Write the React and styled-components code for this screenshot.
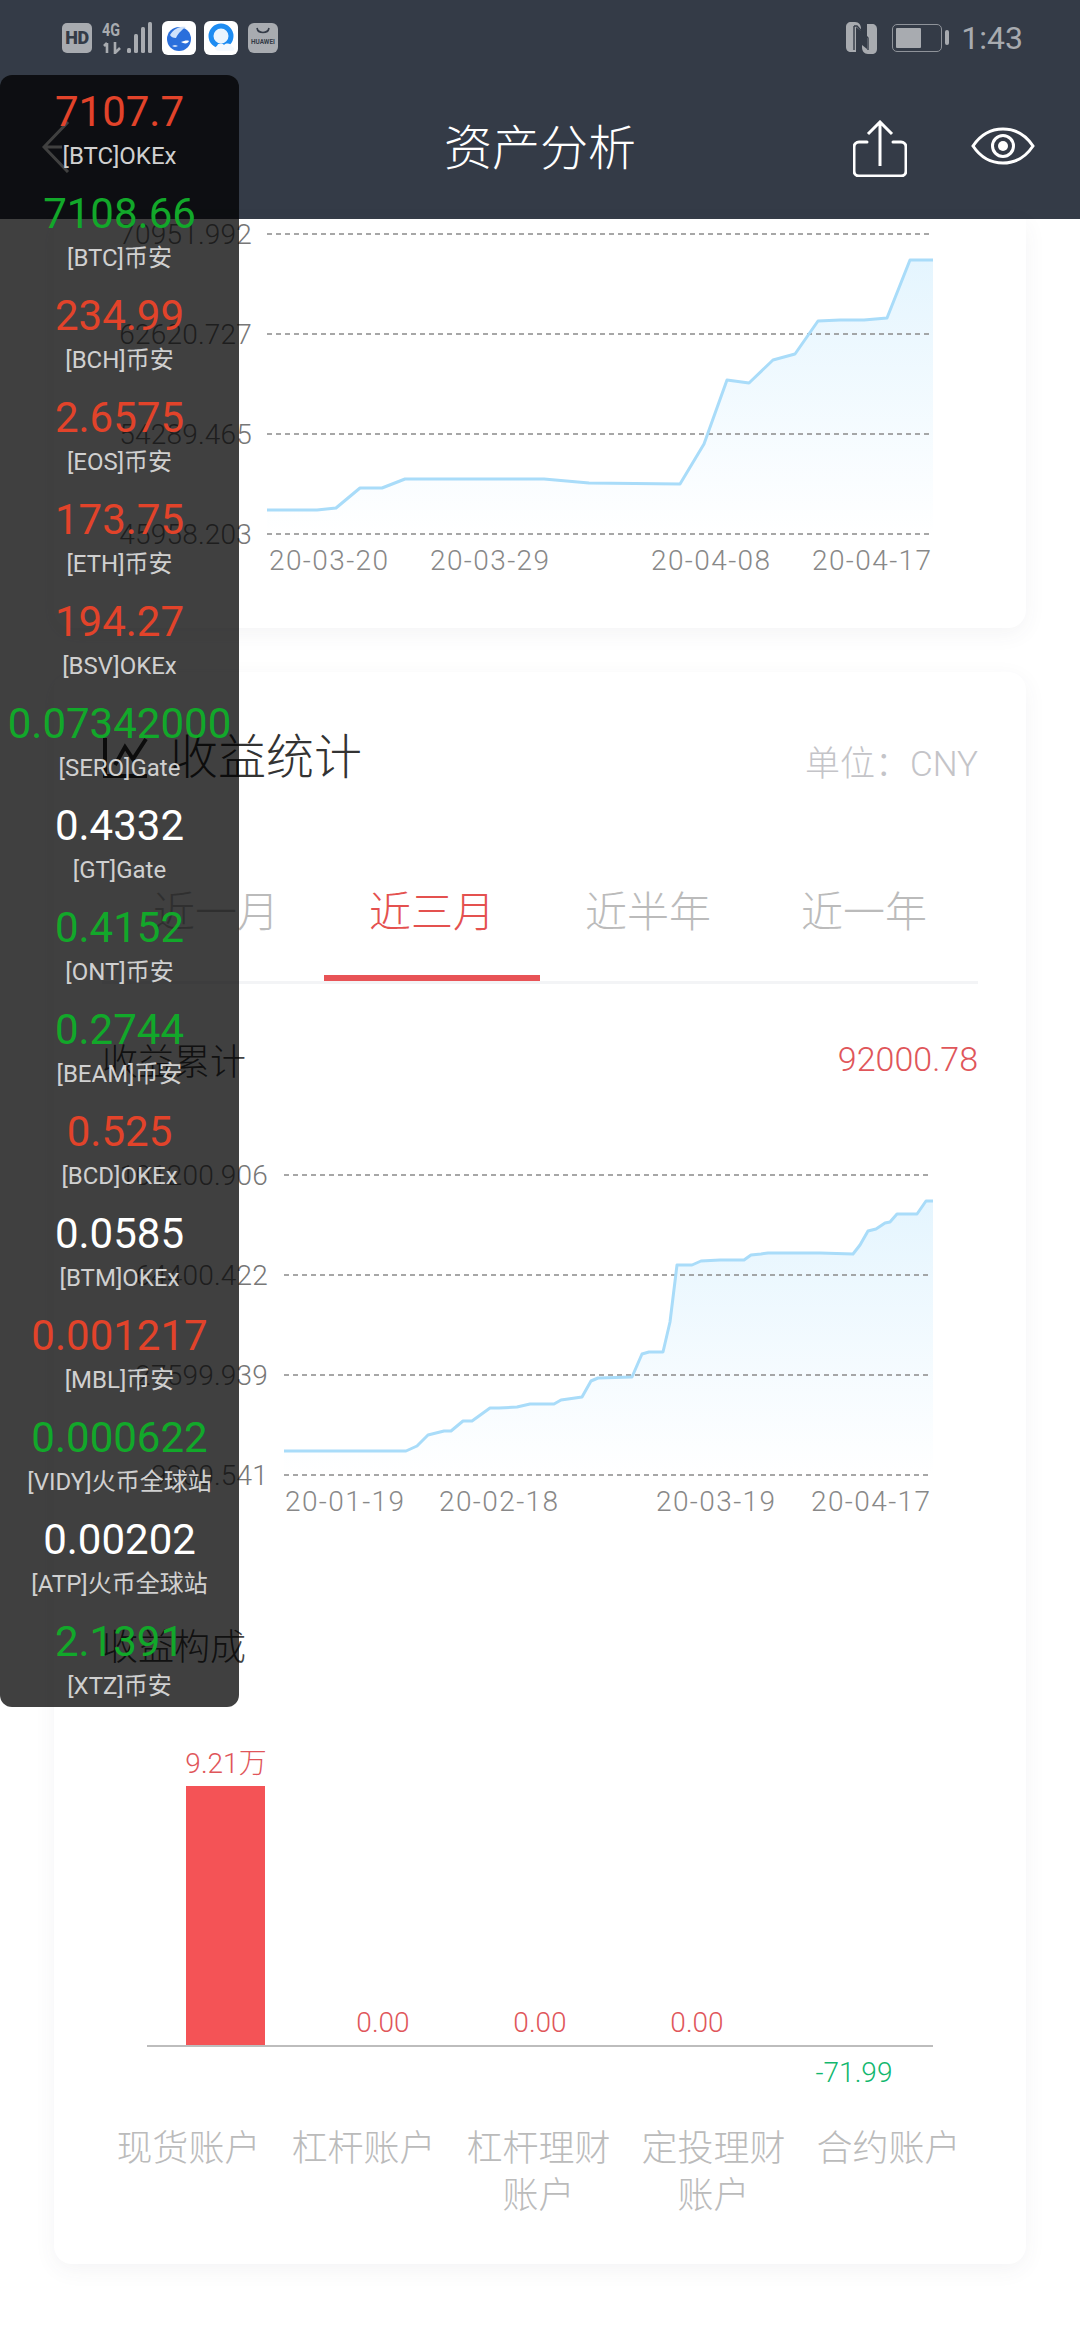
import React from "react";
import styled, { createGlobalStyle } from "styled-components";

const GlobalStyle = createGlobalStyle`
  html, body { margin: 0; padding: 0; background: #fff; }
  body { font-family: Roboto, "Noto Sans CJK SC", sans-serif; }
`;

const Screen = styled.div`
  position: relative;
  width: 1080px;
  height: 2340px;
  overflow: hidden;
  background: #fff;
`;

const Header = styled.header`
  height: 219px;
  background: #343b47;
`;

const StatusBar = styled.div`
  display: flex;
  align-items: center;
  height: 75px;
  padding: 0 57px 0 62px;
  color: #a8abb0;
`;

const HdBadge = styled.span`
  width: 30px;
  height: 30px;
  border-radius: 5px;
  background: #a8abb0;
  color: #343b47;
  font-size: 18px;
  font-weight: 900;
  line-height: 30px;
  text-align: center;
  letter-spacing: -0.5px;
`;

const StatusIcon = styled.svg`
  display: block;
  margin-left: ${(p) => p.$gap || 0}px;
`;

const Spacer = styled.div`
  flex: 1;
`;

const Battery = styled.span`
  position: relative;
  box-sizing: border-box;
  width: 50px;
  height: 28px;
  margin-left: 15px;
  padding: 3px;
  border: 1.5px solid #8f939a;
  border-radius: 5px;
  &::after {
    content: "";
    position: absolute;
    top: 5px;
    right: -8px;
    width: 4px;
    height: 15px;
    border-radius: 2px;
    background: #a8abb0;
  }
`;

const BatteryFill = styled.span`
  display: block;
  height: 100%;
  background: #a8abb0;
  border-radius: 1px;
`;

const Clock = styled.span`
  margin-left: 19px;
  font-size: 32px;
  line-height: 40px;
`;

const NavBar = styled.div`
  display: grid;
  grid-template-columns: 1fr auto 1fr;
  align-items: center;
  height: 144px;
  color: #fff;
`;

const BackIcon = styled.svg`
  display: block;
  margin: 0 0 0 42px;
`;

const Title = styled.h1`
  margin: 0;
  font-size: 48px;
  font-weight: 300;
  line-height: 60px;
  padding-top: 4px;
`;

const NavActions = styled.div`
  display: flex;
  align-items: flex-start;
  justify-content: flex-end;
  gap: 64px;
  padding: 3px 45px 0 0;
`;

const EyeSlot = styled.span`
  display: block;
  padding-top: 7px;
`;

const Main = styled.main`
  padding: 0 54px;
`;

const Card = styled.section`
  box-sizing: border-box;
  height: ${(p) => p.$height}px;
  margin-bottom: 44px;
  border-radius: ${(p) => (p.$cut ? "0 0 18px 18px" : "18px")};
  background: #fff;
  box-shadow: 0 6px 22px rgba(60, 70, 90, 0.06);
  font-weight: 300;
`;

const CardHead = styled.div`
  display: flex;
  align-items: center;
  justify-content: space-between;
  height: 172px;
  padding: 0 48px;
`;

const HeadTitle = styled.div`
  display: flex;
  align-items: center;
  gap: 22px;
  color: #333;
  font-size: 48px;
  line-height: 60px;
`;

const Unit = styled.span`
  padding-top: 4px;
  color: #c4c4c8;
  font-size: 35px;
`;

const Tabs = styled.div`
  display: flex;
  margin: 0 48px;
  padding-left: 6px;
  border-bottom: 3px solid #f3f4f6;
`;

const Tab = styled.div`
  box-sizing: border-box;
  width: 216px;
  height: 137px;
  padding-top: 45px;
  border-bottom: 6px solid ${(p) => (p.$active ? "#e85356" : "transparent")};
  color: ${(p) => (p.$active ? "#e4514f" : "#bbb")};
  font-size: 42px;
  line-height: 48px;
  text-align: center;
`;

const SumRow = styled.div`
  display: flex;
  align-items: center;
  justify-content: space-between;
  height: 152px;
  padding: 0 48px 3px;
  box-sizing: border-box;
  color: #444;
  font-size: 36px;
`;

const SumValue = styled.span`
  color: #e0565a;
  font-size: 34px;
`;

const ChartSvg = styled.svg`
  display: block;
  width: 972px;
  overflow: visible;
  text {
    font-family: Roboto, "Noto Sans CJK SC", sans-serif;
    font-weight: 300;
  }
`;

const SectionTitle = styled.div`
  margin-top: 93px;
  padding: 0 48px;
  color: #444;
  font-size: 36px;
  line-height: 50px;
`;

const Categories = styled.div`
  display: flex;
  margin-top: 13px;
  padding: 0 47px;
`;

const Category = styled.div`
  box-sizing: border-box;
  width: 175px;
  padding: 0 15px;
  color: #bbb;
  font-size: 36px;
  line-height: 47px;
  text-align: center;
`;

const TickerPanel = styled.aside`
  position: absolute;
  top: 75px;
  left: 0;
  width: 239px;
  height: 1632px;
  border-radius: 12px;
  background: rgba(0, 0, 0, 0.75);
`;

const Ticker = styled.div`
  box-sizing: border-box;
  height: 102px;
  padding-top: 8px;
  text-align: center;
  white-space: nowrap;
`;

const tickerColors = { up: "#e2432a", down: "#12a82a", flat: "#fff" };

const Price = styled.div`
  color: ${(p) => tickerColors[p.$tone]};
  font-size: 42px;
  line-height: 58px;
`;

const Pair = styled.div`
  color: #d0d0d0;
  font-size: 24px;
  line-height: 30px;
`;

const tickers = [
  ["7107.7", "[BTC]OKEx", "up"],
  ["7108.66", "[BTC]币安", "down"],
  ["234.99", "[BCH]币安", "up"],
  ["2.6575", "[EOS]币安", "up"],
  ["173.75", "[ETH]币安", "up"],
  ["194.27", "[BSV]OKEx", "up"],
  ["0.07342000", "[SERO]Gate", "down"],
  ["0.4332", "[GT]Gate", "flat"],
  ["0.4152", "[ONT]币安", "down"],
  ["0.2744", "[BEAM]币安", "down"],
  ["0.525", "[BCD]OKEx", "up"],
  ["0.0585", "[BTM]OKEx", "flat"],
  ["0.001217", "[MBL]币安", "up"],
  ["0.000622", "[VIDY]火币全球站", "down"],
  ["0.00202", "[ATP]火币全球站", "flat"],
  ["2.1391", "[XTZ]币安", "down"],
];

// points read off the screenshot, in page pixels
const lineA = [
  [267, 510], [317, 510], [336, 508], [360, 488], [382, 488], [405, 479], [544, 479],
  [589, 483], [680, 484], [704, 444], [727, 380], [749, 383], [773, 360], [795, 354],
  [818, 321], [840, 320], [864, 320], [887, 318], [910, 260], [933, 260],
];

const lineB = [
  [284, 1451], [406, 1451], [417, 1446], [428, 1435], [444, 1431], [451, 1431], [463, 1421],
  [472, 1421], [490, 1408], [499, 1408], [517, 1407], [530, 1404], [554, 1404], [561, 1400],
  [582, 1397], [591, 1381], [598, 1378], [632, 1377], [642, 1354], [649, 1352], [663, 1352],
  [670, 1322], [677, 1265], [692, 1265], [701, 1261], [720, 1260], [744, 1260], [751, 1255],
  [761, 1254], [768, 1253], [820, 1253], [853, 1254], [860, 1245], [868, 1231], [876, 1229],
  [885, 1223], [890, 1222], [897, 1214], [917, 1214], [926, 1201], [933, 1201],
];

const toPoints = (pts) => pts.map((p) => p.join(",")).join(" ");

const LineChart = ({ id, top, height, line, gridFrom, gridTo, ticks, tickRight, dates, floor }) => {
  const first = line[0];
  const last = line[line.length - 1];
  const area = `${toPoints(line)} ${last[0]},${floor} ${first[0]},${floor}`;
  return (
    <ChartSvg height={height} viewBox={`54 ${top} 972 ${height}`}>
      <defs>
        <linearGradient id={id} x1="0" y1="0" x2="0" y2="1">
          <stop offset="0" stopColor="#bde6fd" stopOpacity="0.4" />
          <stop offset="1" stopColor="#bde6fd" stopOpacity="0" />
        </linearGradient>
      </defs>
      <polygon points={area} fill={`url(#${id})`} />
      {ticks.map(([label, y]) => (
        <g key={label}>
          <line x1={gridFrom} x2={gridTo} y1={y} y2={y} stroke="#8a8a8a" strokeWidth="1.5" strokeDasharray="5 4" />
          <text x={tickRight} y={y + 10} textAnchor="end" fontSize="28" letterSpacing="0.2" fill="#777">
            {label}
          </text>
        </g>
      ))}
      <polyline points={toPoints(line)} fill="none" stroke="#a9dcf9" strokeWidth="3" strokeLinejoin="round" />
      {dates.map(([label, x]) => (
        <text key={label} x={x} y={ticks[3][1] + 36} fontSize="28" letterSpacing="1.4" fill="#888">
          {label}
        </text>
      ))}
    </ChartSvg>
  );
};

const BarChart = () => (
  <ChartSvg height="440" viewBox="54 1673 972 440">
    <rect x="186" y="1786" width="79" height="260" fill="#f45356" />
    <line x1="147" x2="933" y1="2046" y2="2046" stroke="#bdbdbd" strokeWidth="2" />
    <text x="226" y="1773" textAnchor="middle" fontSize="28" fill="#e0565a">9.21万</text>
    <text x="383" y="2032" textAnchor="middle" fontSize="28" fill="#e0565a">0.00</text>
    <text x="540" y="2032" textAnchor="middle" fontSize="28" fill="#e0565a">0.00</text>
    <text x="697" y="2032" textAnchor="middle" fontSize="28" fill="#e0565a">0.00</text>
    <text x="854" y="2082" textAnchor="middle" fontSize="28" fill="#12b76e">-71.99</text>
  </ChartSvg>
);

const SignalIcon = () => (
  <StatusIcon $gap={10} width="50" height="32" viewBox="0 0 50 32">
    <text x="0" y="14" fontSize="18" fontWeight="700" fontFamily="Roboto, sans-serif" fill="#a8abb0" textLength="18" lengthAdjust="spacingAndGlyphs">4G</text>
    <path d="M5 21v10M5 21l-3 3M13 20v11l5-5" fill="none" stroke="#a8abb0" strokeWidth="2.6" />
    <rect x="25" y="26" width="4" height="5" rx="1.5" fill="#a8abb0" />
    <rect x="32" y="12" width="4" height="19" rx="1.5" fill="#a8abb0" />
    <rect x="39" y="5" width="4" height="26" rx="1.5" fill="#a8abb0" />
    <rect x="46" y="0" width="4" height="31" rx="1.5" fill="#a8abb0" />
  </StatusIcon>
);

const GlobeApp = () => (
  <StatusIcon $gap={10} width="34" height="34" viewBox="0 0 34 34">
    <rect width="34" height="34" rx="6" fill="#fff" />
    <circle cx="17" cy="18" r="12" fill="#2a6fdc" />
    <path d="M8 14c4-7 11-9 16-8-3 2-8 6-10 11-3 0-5-1-6-3z" fill="#cfe2fb" />
    <path d="M19 21c3-1 6-2 8-1-1 3-5 3-8 1zM10 25c2-1 4-1 6 0-2 1-4 1-6 0z" fill="#fff" />
  </StatusIcon>
);

const CloudApp = () => (
  <StatusIcon $gap={8} width="34" height="34" viewBox="0 0 34 34">
    <rect width="34" height="34" rx="6" fill="#fff" />
    <circle cx="17" cy="15" r="10" fill="#eaf5fe" stroke="#1d8cf2" strokeWidth="5" />
    <path d="M14 30c-3 0-4-4-1-5 1-3 5-3 7-1 3-3 8-1 8 2 3 0 3 4 0 4z" fill="#f4f9fe" />
  </StatusIcon>
);

const HuaweiApp = () => (
  <StatusIcon $gap={10} width="30" height="30" viewBox="0 0 30 30">
    <rect width="30" height="30" rx="6" fill="#a8abb0" />
    <path d="M9 5c1 6 11 6 12 0" fill="none" stroke="#343b47" strokeWidth="1.6" />
    <text x="15" y="21" textAnchor="middle" fontSize="6.4" fontWeight="700" fontFamily="Roboto, sans-serif" fill="#343b47">HUAWEI</text>
  </StatusIcon>
);

const NfcIcon = () => (
  <StatusIcon width="31" height="32" viewBox="0 0 31 32">
    <path d="M5 0h4c4 0 6 3 6 7v2L10 5v25H5c-3 0-5-2-5-5V5c0-3 2-5 5-5z" fill="#a8abb0" />
    <path d="M26 32h-4c-4 0-6-3-6-7v-2l5 4V2h5c3 0 5 2 5 5v20c0 3-2 5-5 5z" fill="#a8abb0" />
    <path d="M8 4h3l11 12v12M8 4v24" fill="none" stroke="#343b47" strokeWidth="1.4" />
  </StatusIcon>
);

const ShareIcon = () => (
  <svg width="54" height="57" viewBox="0 0 54 57" fill="none" stroke="#fff" strokeWidth="3">
    <path d="M27 2v44M15 14 27 2l12 12" />
    <path d="M14 22H6a5 5 0 0 0-5 5v24a5 5 0 0 0 5 5h42a5 5 0 0 0 5-5V27a5 5 0 0 0-5-5h-8" strokeLinecap="round" />
  </svg>
);

const EyeIcon = () => (
  <svg display="block" width="64" height="38" viewBox="0 0 64 38" fill="none" stroke="#fff" strokeWidth="3">
    <path d="M2 19C10 7 20 2 32 2s22 5 30 17c-8 12-18 17-30 17S10 31 2 19z" />
    <circle cx="32" cy="19" r="10.5" />
    <circle cx="32" cy="19" r="5" fill="#fff" stroke="none" />
  </svg>
);

const TrendIcon = () => (
  <svg width="46" height="42" viewBox="0 0 46 42" fill="none" stroke="#333" strokeWidth="4">
    <path d="M3 1v38h42" />
    <path d="M13 28 23 10l8 12 13-20" />
  </svg>
);

export default function App() {
  return (
    <Screen>
      <GlobalStyle />
      <Header>
        <StatusBar>
          <HdBadge>HD</HdBadge>
          <SignalIcon />
          <GlobeApp />
          <CloudApp />
          <HuaweiApp />
          <Spacer />
          <NfcIcon />
          <Battery>
            <BatteryFill style={{ width: "58%" }} />
          </Battery>
          <Clock>1:43</Clock>
        </StatusBar>
        <NavBar>
          <BackIcon width="28" height="52" viewBox="0 0 28 52" fill="none" stroke="#fff" strokeWidth="3">
            <path d="M26 1 2 26l24 25M2 26h18" />
          </BackIcon>
          <Title>资产分析</Title>
          <NavActions>
            <ShareIcon />
            <EyeSlot>
              <EyeIcon />
            </EyeSlot>
          </NavActions>
        </NavBar>
      </Header>

      <Main>
        <Card $cut $height={409}>
          <LineChart
            id="fillA"
            top={219}
            height={370}
            line={lineA}
            floor={534}
            gridFrom={267}
            gridTo={933}
            tickRight={252}
            ticks={[["70951.992", 234], ["62620.727", 334], ["54289.465", 434], ["45958.203", 534]]}
            dates={[["20-03-20", 269], ["20-03-29", 430], ["20-04-08", 651], ["20-04-17", 812]]}
          />
        </Card>

        <Card $height={1592}>
          <CardHead>
            <HeadTitle>
              <TrendIcon />
              收益统计
            </HeadTitle>
            <Unit>单位：CNY</Unit>
          </CardHead>
          <Tabs>
            <Tab>近一月</Tab>
            <Tab $active>近三月</Tab>
            <Tab>近半年</Tab>
            <Tab>近一年</Tab>
          </Tabs>
          <SumRow>
            收益累计
            <SumValue>92000.78</SumValue>
          </SumRow>
          <LineChart
            id="fillB"
            top={1136}
            height={394}
            line={lineB}
            floor={1475}
            gridFrom={284}
            gridTo={930}
            tickRight={268}
            ticks={[["101200.906", 1175], ["64400.422", 1275], ["27599.939", 1375], ["-9200.541", 1475]]}
            dates={[["20-01-19", 285], ["20-02-18", 439], ["20-03-19", 656], ["20-04-17", 811]]}
          />
          <SectionTitle>收益构成</SectionTitle>
          <BarChart />
          <Categories>
            <Category>现货账户</Category>
            <Category>杠杆账户</Category>
            <Category>杠杆理财账户</Category>
            <Category>定投理财账户</Category>
            <Category>合约账户</Category>
          </Categories>
        </Card>
      </Main>

      <TickerPanel>
        {tickers.map(([price, pair, tone]) => (
          <Ticker key={pair}>
            <Price $tone={tone}>{price}</Price>
            <Pair>{pair}</Pair>
          </Ticker>
        ))}
      </TickerPanel>
    </Screen>
  );
}
